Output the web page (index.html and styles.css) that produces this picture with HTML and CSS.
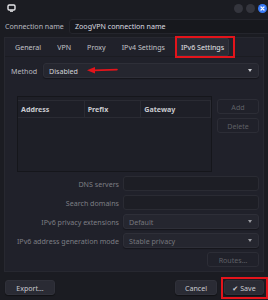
FILE: index.html
```html
<!DOCTYPE html>
<html lang="en">
<head>
  <meta charset="UTF-8" />
  <title>Editing ZoogVPN connection name</title>
  <link rel="stylesheet" href="styles.css">
</head>
<body>
  <div class="window">
    <div class="titlebar">
      <svg class="app-icon" width="9" height="8" viewBox="0 0 9 8">
        <rect x="1" y="1" width="7" height="5" rx="1.2" fill="none" stroke="#e6e6ea" stroke-width="1.4"/>
        <rect x="3" y="6.6" width="3" height="1.2" fill="#e6e6ea"/>
      </svg>
      <div class="win-buttons">
        <span class="win-btn"></span>
        <span class="win-btn"></span>
        <span class="win-btn close">
          <svg width="9" height="9" viewBox="0 0 9 9"><path d="M3 3l3 3M6 3l-3 3" stroke="#fff" stroke-width="1.2" stroke-linecap="round"/></svg>
        </span>
      </div>
    </div>

    <div class="name-row">
      <label>Connection name</label>
      <div class="entry name-entry">ZoogVPN connection name</div>
    </div>

    <div class="notebook">
      <div class="tabs">
        <span class="tab">General</span>
        <span class="tab">VPN</span>
        <span class="tab">Proxy</span>
        <span class="tab">IPv4 Settings</span>
        <span class="tab active">IPv6 Settings</span>
      </div>

      <div class="page">
        <div class="method-row">
          <label>Method</label>
          <div class="combo">
            <span>Disabled</span>
            <span class="caret"></span>
          </div>
        </div>

        <div class="addresses">
          <div class="table">
            <div class="thead">
              <span class="col-address">Address</span>
              <span class="col-prefix">Prefix</span>
              <span class="col-gateway">Gateway</span>
            </div>
          </div>
          <div class="side-buttons">
            <button class="btn disabled">Add</button>
            <button class="btn disabled">Delete</button>
          </div>
        </div>

        <div class="form">
          <div class="form-row">
            <label>DNS servers</label>
            <div class="entry"></div>
          </div>
          <div class="form-row">
            <label>Search domains</label>
            <div class="entry"></div>
          </div>
          <div class="form-row">
            <label>IPv6 privacy extensions</label>
            <div class="combo dim"><span>Default</span><span class="caret"></span></div>
          </div>
          <div class="form-row">
            <label>IPv6 address generation mode</label>
            <div class="combo dim"><span>Stable privacy</span><span class="caret"></span></div>
          </div>
          <div class="routes-row">
            <button class="btn routes disabled">Routes…</button>
          </div>
        </div>
      </div>
    </div>

    <div class="footer">
      <button class="btn export">Export…</button>
      <div class="footer-right">
        <button class="btn cancel">Cancel</button>
        <button class="btn save">&#10004; Save</button>
      </div>
    </div>

    <div class="mark mark-tab"></div>
    <div class="mark mark-save"></div>
    <svg class="arrow" width="32" height="8" viewBox="0 0 32 8">
      <path d="M31 3.6L8 4.4" stroke="#e3141b" stroke-width="1.6" stroke-linecap="round"/>
      <path d="M1 4.3L9 1v6.4z" fill="#e3141b"/>
    </svg>
  </div>
</body>
</html>
```

FILE: styles.css
```css
body {
  margin: 0;
  background: #1b1c22;
  font-family: 'Noto Sans', 'DejaVu Sans', sans-serif;
  font-size: 7.1px;
  color: #c9cacf;
}
.window {
  position: relative;
  width: 268px;
  height: 300px;
  overflow: hidden;
}
.titlebar {
  height: 16px;
  display: flex;
  align-items: center;
  justify-content: space-between;
  padding: 0 1px 0 7px;
}
.app-icon {
  display: block;
}
.win-buttons {
  display: flex;
  gap: 3px;
}
.win-btn {
  width: 9px;
  height: 9px;
  border-radius: 50%;
  background: #34353d;
  display: flex;
  align-items: center;
  justify-content: center;
}
.win-btn.close {
  background: #3a7bf7;
}
.name-row {
  display: flex;
  align-items: center;
  height: 16px;
  margin-top: 2px;
  padding-left: 5px;
}
.name-row label {
  width: 64px;
  color: #b9bac0;
}
.entry {
  flex: 1;
  height: 15px;
  box-sizing: border-box;
  background: #17181d;
  border: 1px solid #24252c;
  border-radius: 3px;
  padding: 0 5px;
  display: flex;
  align-items: center;
}
.name-entry {
  color: #dcdce0;
  margin-right: -6px;
}
.notebook {
  margin: 3px 4px 0 4px;
  height: 235px;
  box-sizing: border-box;
  background: #20212a;
  border: 1px solid #272830;
  display: flex;
  flex-direction: column;
}
.tabs {
  height: 18px;
  display: flex;
  align-items: center;
  padding-left: 2px;
  border-bottom: 1px solid #1b1c22;
}
.tab {
  padding: 0 8px;
  height: 16px;
  display: flex;
  align-items: center;
  color: #c2c3c8;
}
.tab.active {
  padding: 0 4px;
  background: #2b2c35;
  border: 1px solid #33343d;
  border-radius: 2px;
  color: #e4e4e8;
  margin-left: 3px;
}
.page {
  padding: 6px 4px 0 6px;
}
.method-row {
  display: flex;
  align-items: center;
  height: 15px;
}
.method-row label {
  width: 32px;
  color: #b9bac0;
}
.combo {
  flex: 1;
  height: 15px;
  box-sizing: border-box;
  background: #25262f;
  border: 1px solid #2e2f38;
  border-radius: 3px;
  padding: 0 5px;
  display: flex;
  align-items: center;
  justify-content: space-between;
  color: #d2d3d8;
  box-shadow: 0 1px 1px rgba(0, 0, 0, 0.35);
}
.combo.dim {
  color: #76777d;
}
.caret {
  width: 0;
  height: 0;
  border-left: 2.5px solid transparent;
  border-right: 2.5px solid transparent;
  border-top: 3px solid #c9cacf;
  margin-right: 1px;
}
.combo.dim .caret {
  border-top-color: #9a9ba1;
}
.addresses {
  display: flex;
  gap: 5px;
  margin-top: 18px;
  padding-left: 6px;
}
.table {
  width: 195px;
  height: 76px;
  box-sizing: border-box;
  border: 1px solid #15161b;
  background: #1e1f27;
}
.thead {
  height: 16px;
  margin-top: 3px;
  display: flex;
  align-items: center;
  font-weight: bold;
  color: #c9cacf;
  border-top: 1px solid #2a2b33;
  border-bottom: 1px solid #2a2b33;
}
.thead span {
  height: 100%;
  display: flex;
  align-items: center;
  box-sizing: border-box;
  padding-left: 3px;
  border-right: 1px solid #2a2b33;
}
.col-address { width: 67px; }
.col-prefix { width: 57px; }
.col-gateway { width: 70px; }
.side-buttons {
  display: flex;
  flex-direction: column;
  gap: 4px;
  margin-top: 3px;
}
.btn {
  font-family: inherit;
  font-size: 7.1px;
  height: 15px;
  box-sizing: border-box;
  background: #2a2b34;
  border: 1px solid #30313a;
  border-radius: 3px;
  color: #c9cacf;
  padding: 0;
  box-shadow: 0 1px 1px rgba(0, 0, 0, 0.4);
}
.btn.disabled {
  background: #20212a;
  border-color: #2c2d36;
  color: #5f6066;
  box-shadow: none;
}
.side-buttons .btn {
  width: 42px;
}
.form {
  margin-top: 4px;
  display: flex;
  flex-direction: column;
  gap: 4px;
}
.form-row {
  display: flex;
  align-items: center;
  height: 15px;
}
.form-row label {
  width: 108px;
  margin-right: 4px;
  text-align: right;
  color: #7d7e84;
}
.form-row .entry {
  background: #1d1e25;
  border-color: #2a2b33;
}
.routes-row {
  display: flex;
  justify-content: flex-end;
}
.btn.routes {
  width: 52px;
}
.footer {
  display: flex;
  justify-content: space-between;
  align-items: center;
  padding: 8px 4px 0 5px;
}
.export {
  width: 50px;
}
.footer-right {
  display: flex;
  gap: 7px;
}
.cancel {
  width: 42px;
}
.save {
  width: 40px;
}
.mark {
  position: absolute;
  border: 2px solid #e3141b;
  box-sizing: border-box;
}
.mark-tab {
  left: 175px;
  top: 36px;
  width: 60px;
  height: 22px;
}
.mark-save {
  left: 221px;
  top: 277px;
  width: 47px;
  height: 22px;
}
.arrow {
  position: absolute;
  left: 86px;
  top: 66px;
}
```
